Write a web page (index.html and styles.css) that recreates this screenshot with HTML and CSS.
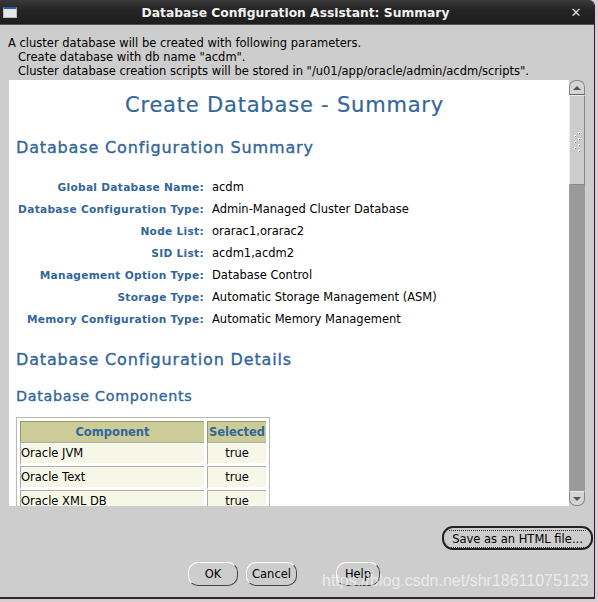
FILE: index.html
```
<!DOCTYPE html>
<html>
<head>
<meta charset="utf-8">
<link rel="stylesheet" href="styles.css">
</head>
<body>
<div class="window">
  <div class="titlebar">
    <div class="winicon"></div>
    <div class="title">Database Configuration Assistant: Summary</div>
    <div class="close">✕</div>
  </div>
  <div class="body">
    <div class="info">
      <div>A cluster database will be created with following parameters.</div>
      <div class="ind">Create database with db name "acdm".</div>
      <div class="ind">Cluster database creation scripts will be stored in "/u01/app/oracle/admin/acdm/scripts".</div>
    </div>
    <div class="panel">
      <div class="content">
        <h1>Create Database - Summary</h1>
        <h2>Database Configuration Summary</h2>
        <div class="summary">
          <div class="lbl">Global Database Name:</div><div class="val">acdm</div>
          <div class="lbl">Database Configuration Type:</div><div class="val">Admin-Managed Cluster Database</div>
          <div class="lbl">Node List:</div><div class="val">orarac1,orarac2</div>
          <div class="lbl">SID List:</div><div class="val">acdm1,acdm2</div>
          <div class="lbl">Management Option Type:</div><div class="val">Database Control</div>
          <div class="lbl">Storage Type:</div><div class="val">Automatic Storage Management (ASM)</div>
          <div class="lbl">Memory Configuration Type:</div><div class="val">Automatic Memory Management</div>
        </div>
        <h2 class="details">Database Configuration Details</h2>
        <h3>Database Components</h3>
        <table class="tbl">
          <tr><th class="c1">Component</th><th class="c2">Selected</th></tr>
          <tr><td class="c1">Oracle JVM</td><td class="c2">true</td></tr>
          <tr><td class="c1">Oracle Text</td><td class="c2">true</td></tr>
          <tr><td class="c1">Oracle XML DB</td><td class="c2">true</td></tr>
        </table>
      </div>
      <div class="scrollbar">
        <div class="sb-btn up"><span></span></div>
        <div class="thumb">
          <svg width="14" height="30" viewBox="0 0 14 30">
            <g fill="#fff">
              <rect x="8" y="7" width="2" height="2"/><rect x="4" y="10" width="2" height="2"/>
              <rect x="8" y="13" width="2" height="2"/><rect x="4" y="16" width="2" height="2"/>
              <rect x="8" y="19" width="2" height="2"/><rect x="4" y="22" width="2" height="2"/>
              <rect x="8" y="25" width="2" height="2"/>
            </g>
            <g fill="#888">
              <rect x="9" y="8" width="1" height="1"/><rect x="5" y="11" width="1" height="1"/>
              <rect x="9" y="14" width="1" height="1"/><rect x="5" y="17" width="1" height="1"/>
              <rect x="9" y="20" width="1" height="1"/><rect x="5" y="23" width="1" height="1"/>
              <rect x="9" y="26" width="1" height="1"/>
            </g>
          </svg>
        </div>
        <div class="track"></div>
        <div class="sb-btn down"><span></span></div>
      </div>
    </div>
    <div class="saverow">
      <button class="btn save"><span class="focus">Save as an HTML file...</span></button>
    </div>
    <div class="btnrow">
      <button class="btn ok">OK</button>
      <button class="btn cancel">Cancel</button>
      <button class="btn help">Help</button>
    </div>
    <div class="watermark">https://blog.csdn.net/shr18611075123</div>
  </div>
</div>
</body>
</html>
```
FILE: styles.css
```
* { box-sizing: border-box; }
html, body { margin: 0; padding: 0; }
body {
  width: 598px;
  height: 602px;
  background: #d9cdd3;
  overflow: hidden;
  font-family: "DejaVu Sans", sans-serif;
}
.window {
  width: 595px;
  height: 599px;
  background: #cdcdcd;
  border-right: 1px solid #222;
  border-bottom: 2px solid #2a2a2a;
  border-top-right-radius: 6px;
  display: flex;
  flex-direction: column;
  position: relative;
  overflow: hidden;
}
.titlebar {
  height: 25px;
  flex: none;
  background: linear-gradient(#3a3a3a, #252525 40%, #1e1e1e);
  border-bottom: 1px solid #555;
  display: flex;
  align-items: center;
  padding: 1px 0 0 3px;
}
.winicon {
  width: 14px;
  height: 11px;
  background: #e6e6e6;
  border: 1px solid #bbb;
  border-top: 2px solid #2b5ca8;
  flex: none;
}
.title {
  flex: 1;
  text-align: center;
  color: #f2f2f2;
  font-weight: bold;
  font-size: 12.3px;
  padding-left: 10px;
}
.close {
  width: 30px;
  color: #d8d8d8;
  font-size: 13px;
  font-weight: bold;
  text-align: center;
  padding-right: 6px;
}
.body {
  flex: 1;
  display: flex;
  flex-direction: column;
  position: relative;
}
.info {
  font-size: 11.5px;
  color: #000;
  line-height: 14px;
  padding: 11px 0 0 8px;
  height: 55px;
}
.info .ind { padding-left: 10px; }
.panel {
  margin-left: 9px;
  width: 576px;
  height: 426px;
  display: flex;
  background: #fff;
}
.content {
  flex: 1;
  overflow: hidden;
  padding: 0 0 0 7px;
  color: #336699;
}
h1 {
  margin: 12px 0 0 0;
  padding-right: 16px;
  text-align: center;
  font-weight: normal;
  font-size: 21px;
  line-height: 26px;
  letter-spacing: 0.8px;
  color: #336699;
  -webkit-text-stroke: 0.2px #336699;
}
h2, h3 {
  margin: 20px 0 0 0;
  font-weight: normal;
  font-size: 16px;
  line-height: 20px;
  letter-spacing: 0.85px;
  color: #336699;
  -webkit-text-stroke: 0.35px #336699;
}
h3 {
  margin-top: 16px;
  font-size: 14.3px;
  letter-spacing: 0.7px;
}
.summary {
  display: grid;
  grid-template-columns: 188px auto;
  grid-auto-rows: 22px;
  column-gap: 8px;
  margin-top: 18px;
  font-size: 11.5px;
}
.lbl {
  text-align: right;
  font-weight: bold;
  font-size: 10.6px;
  letter-spacing: 0.3px;
  color: #336699;
  line-height: 22px;
  white-space: nowrap;
}
.val {
  color: #000;
  line-height: 22px;
  white-space: nowrap;
}
h2.details { margin-top: 20px; }
.tbl {
  margin-top: 11px;
  border: 1px solid #b8b8b8;
  border-spacing: 3px 0;
  padding-top: 3px;
  font-size: 11.5px;
  width: 254px;
}
.tbl th {
  background: #cccc99;
  color: #336699;
  font-weight: bold;
  height: 21px;
  border-top: 1px solid #999966;
  border-left: 1px solid #999966;
  padding: 0;
}
.tbl td {
  background: #f7f7e7;
  color: #000;
  height: 24px;
  border-top: 1px solid #aaa;
  border-left: 1px solid #aaa;
  border-bottom: 3px solid #fff;
  padding: 0;
}
.tbl .c1 { width: 184px; }
.tbl td.c2 { text-align: center; }
.scrollbar {
  width: 16px;
  flex: none;
  display: flex;
  flex-direction: column;
  background: #cdcdcd;
}
.sb-btn {
  height: 15px;
  background: #d4d4d4;
  border: 1px solid #888;
  display: flex;
  align-items: center;
  justify-content: center;
  flex: none;
}
.sb-btn.up { border-radius: 7px 7px 0 0; border-bottom-color: #666; }
.sb-btn.down { border-radius: 0 0 7px 7px; border-top-color: #eee; }
.sb-btn span {
  width: 0; height: 0;
  border-left: 4px solid transparent;
  border-right: 4px solid transparent;
}
.sb-btn.up span { border-bottom: 4px solid #555; }
.sb-btn.down span { border-top: 4px solid #555; }
.thumb {
  height: 90px;
  flex: none;
  background: #cccccc;
  border: 1px solid #888;
  border-top-color: #eee;
  border-left-color: #eee;
  display: flex;
  align-items: center;
  justify-content: center;
}
.track { flex: 1; background: #9a9a9a; }
.saverow {
  display: flex;
  justify-content: flex-end;
  padding: 20px 1px 0 0;
}
.btn {
  font-family: "DejaVu Sans", sans-serif;
  font-size: 11.5px;
  color: #000;
  background: #cdcdcd;
  border: 1px solid #444;
  border-top-color: #fff;
  border-left-color: #fff;
  border-radius: 10px;
  height: 24px;
  padding: 0;
}
.save {
  width: 151px;
  border: 2px solid #222;
  border-radius: 11px;
  padding: 2px 5px;
}
.save .focus {
  display: block;
  border-top: 1px dotted #222;
  border-bottom: 1px dotted #222;
  line-height: 16px;
  font-size: 11.5px;
}
.btnrow {
  display: flex;
  padding: 12px 0 0 188px;
}
.ok { width: 50px; }
.cancel { width: 51px; margin-left: 8px; }
.help { width: 44px; margin-left: 39px; }
.watermark {
  position: absolute;
  left: 322px;
  top: 547px;
  font-family: "Liberation Sans", Arial, sans-serif;
  font-size: 16px;
  color: rgba(255,255,255,0.6);
  white-space: nowrap;
}
```
